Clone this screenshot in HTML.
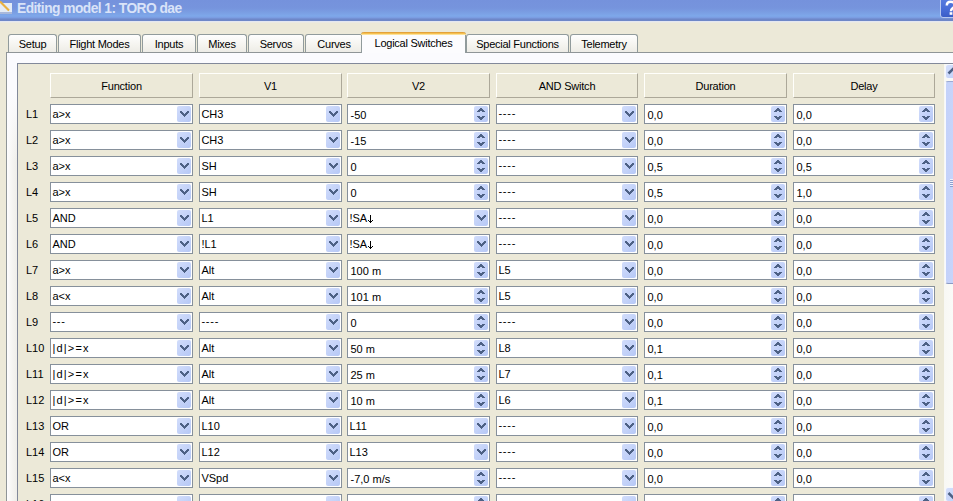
<!DOCTYPE html>
<html><head><meta charset="utf-8"><style>
html,body{margin:0;padding:0;}
body{width:953px;height:501px;overflow:hidden;position:relative;background:#ece9d8;font-family:"Liberation Sans",sans-serif;font-size:11px;color:#000;}
div,i,span{box-sizing:border-box;}
.title{position:absolute;left:0;top:0;width:953px;height:23px;background:linear-gradient(#7592dc 0px,#7694dd 8px,#7a9de2 12px,#7ea8ea 16px,#7a9ae0 18px,#6e87c8 19px,#6e87c8 21px,#e4e7f0 21px,#e4e7f0 22px,#ebeae2 22px,#ebeae2 23px);}
.ttl{position:absolute;left:17px;top:1px;font-weight:bold;font-size:13.8px;line-height:16px;color:#d9e3f8;letter-spacing:-0.55px;}
.ico{position:absolute;left:0;top:0;}
.help{position:absolute;left:940px;top:-3px;width:20px;height:21px;background:linear-gradient(#5a7ee0,#4468d4 70%,#3a5cc6);border:1px solid #b8c8f0;border-radius:3px;}
.help svg{position:absolute;left:0px;top:2px;}
.tab{position:absolute;top:34px;height:19px;border:1px solid #919b9c;border-bottom:none;border-radius:3px 3px 0 0;background:linear-gradient(#fefefe,#f4f3ee 60%,#ecebe5);text-align:center;line-height:18px;white-space:nowrap;letter-spacing:-0.25px;}
.tab.act{top:32px;height:21px;background:#fcfcfe;border-top:none;z-index:3;line-height:18px;padding-top:2px;}
.tab.act::before{content:"";position:absolute;left:-1px;right:-1px;top:0;height:3px;border-radius:3px 3px 0 0;background:linear-gradient(#e3a23a 0 1px,#f6bf4f 1px 2px,#fbe29a 2px 3px);}
.pane{position:absolute;left:6px;top:52px;width:960px;height:460px;border:1px solid #8f9597;background:linear-gradient(180deg,#fbfbfe 0,#fbfbfe 40px,rgba(251,251,254,0) 110px),linear-gradient(90deg,#fdfdfe 0,#f6f5f2 5px,#efeee9 10px);z-index:2;}
.act{z-index:3}
.panel{position:absolute;left:17px;top:63px;width:940px;height:450px;border:1px solid #82899a;background:#ece9d8;z-index:3;}
.hd,.lb,.cb,.sb{z-index:4;}
.hd{position:absolute;top:73px;height:25px;border-top:1px solid #fffffb;border-left:1px solid #fffffb;border-right:1px solid #aca899;border-bottom:1px solid #aca899;background:#ece9d8;text-align:center;line-height:25px;letter-spacing:-0.2px;}
.lb{position:absolute;left:26px;height:20px;line-height:20px;}
.cb{position:absolute;height:20px;border:1px solid #86909b;background:#fff;overflow:hidden;white-space:nowrap;}
.cb span{position:absolute;left:1.4px;top:0;line-height:18px;}
.dd{position:absolute;right:1px;top:1px;width:14px;height:16px;border-radius:2px;background:linear-gradient(135deg,#d2ddfb,#b6c8f6);}
.sb{position:absolute;left:944px;top:64px;width:11px;height:440px;background:linear-gradient(90deg,#f8f8f4,#fbfbf9);}
.sbup{position:absolute;left:1px;top:0px;width:18px;height:15px;border-radius:3px;background:linear-gradient(135deg,#d6e0fc,#bccdf8);border:1px solid #f6f8fe;}
.sbup svg,.sbdn svg{position:absolute;left:1px;top:0;}
.thumb{position:absolute;left:1px;top:17px;width:18px;height:203px;border-radius:3px;background:linear-gradient(90deg,#c4d2fa,#cad7fb);border:1px solid #f8f9fe;border-top:1px solid #9aaad4;border-bottom:1px solid #8b9ac4;}
.grip{position:absolute;left:4px;top:97px;width:10px;height:8px;background:repeating-linear-gradient(#eef2fe 0 1px,#8d9fd0 1px 2px);}
.sbdn{position:absolute;left:1px;top:423px;width:18px;height:15px;border-radius:3px;background:linear-gradient(135deg,#d6e0fc,#bccdf8);border:1px solid #f6f8fe;}
.spn span{left:2.5px;top:1px;}
b{font-weight:normal;}
.ls{letter-spacing:1.2px;}
.ds{position:relative;top:-1px;letter-spacing:0.8px;}
.arr{vertical-align:-3px;margin-left:1px;}

</style></head><body>
<div class="title"><svg class="ico" width="14" height="16"><rect x="0" y="3" width="12" height="9" fill="#e4ebf5"/><rect x="0" y="12" width="12" height="2" fill="#a9b8da"/><path d="M0 1.5L9 10.5" stroke="#e8b040" stroke-width="2.2"/></svg><div class="ttl">Editing model 1: TORO dae</div><div class="help"><svg width="18" height="17"><path d="M5.8 5.5Q5.8 1.8 9.8 1.8Q13.8 1.8 13.8 5Q13.8 7 11.5 8.3Q10 9.2 10 11.2" stroke="#fff" stroke-width="2.5" fill="none"/><rect x="8.6" y="12.2" width="2.8" height="2.6" fill="#fff"/></svg></div></div>
<div class="tline"></div>
<div class="tab" style="left:8px;width:49px">Setup</div><div class="tab" style="left:58px;width:83px">Flight Modes</div><div class="tab" style="left:142px;width:54px">Inputs</div><div class="tab" style="left:197px;width:50px">Mixes</div><div class="tab" style="left:248px;width:56px">Servos</div><div class="tab" style="left:305px;width:58px">Curves</div><div class="tab" style="left:466px;width:103px">Special Functions</div><div class="tab" style="left:570px;width:68px">Telemetry</div><div class="tab act" style="left:361px;width:105px">Logical Switches</div>
<div class="pane"></div>

<div class="panel"></div>
<div class="hd" style="left:50px;width:143px">Function</div><div class="hd" style="left:199px;width:143px">V1</div><div class="hd" style="left:347px;width:143px">V2</div><div class="hd" style="left:496px;width:142px">AND Switch</div><div class="hd" style="left:644px;width:143px">Duration</div><div class="hd" style="left:793px;width:142px">Delay</div><div class="lb" style="top:104px">L1</div><div class="cb" style="left:50px;top:104px;width:143px"><span>a>x</span><svg class="dd" width="14" height="16"><path d="M3 5h2v1h1v1h1v1h1v-1h1v-1h1v-1h2v2h-1v1h-1v1h-1v1h-1v1h-1v-1h-1v-1h-1v-1h-1v-1h-1z" fill="#4d6185"/></svg></div><div class="cb" style="left:199px;top:104px;width:143px"><span>CH3</span><svg class="dd" width="14" height="16"><path d="M3 5h2v1h1v1h1v1h1v-1h1v-1h1v-1h2v2h-1v1h-1v1h-1v1h-1v1h-1v-1h-1v-1h-1v-1h-1v-1h-1z" fill="#4d6185"/></svg></div><div class="cb spn" style="left:347px;top:104px;width:143px"><span>-50</span><svg class="dd" width="14" height="16"><path d="M6 2h2v1h1v1h1v1h1v1h-3v-1h-2v1h-3v-1h1v-1h1v-1h1z M3 10h3v1h2v-1h3v1h-1v1h-1v1h-1v1h-2v-1h-1v-1h-1v-1h-1z" fill="#4d6185"/></svg></div><div class="cb" style="left:496px;top:104px;width:142px"><span><b class="ds">----</b></span><svg class="dd" width="14" height="16"><path d="M3 5h2v1h1v1h1v1h1v-1h1v-1h1v-1h2v2h-1v1h-1v1h-1v1h-1v1h-1v-1h-1v-1h-1v-1h-1v-1h-1z" fill="#4d6185"/></svg></div><div class="cb spn" style="left:644px;top:104px;width:143px"><span>0,0</span><svg class="dd" width="14" height="16"><path d="M6 2h2v1h1v1h1v1h1v1h-3v-1h-2v1h-3v-1h1v-1h1v-1h1z M3 10h3v1h2v-1h3v1h-1v1h-1v1h-1v1h-2v-1h-1v-1h-1v-1h-1z" fill="#4d6185"/></svg></div><div class="cb spn" style="left:793px;top:104px;width:142px"><span>0,0</span><svg class="dd" width="14" height="16"><path d="M6 2h2v1h1v1h1v1h1v1h-3v-1h-2v1h-3v-1h1v-1h1v-1h1z M3 10h3v1h2v-1h3v1h-1v1h-1v1h-1v1h-2v-1h-1v-1h-1v-1h-1z" fill="#4d6185"/></svg></div><div class="lb" style="top:130px">L2</div><div class="cb" style="left:50px;top:130px;width:143px"><span>a>x</span><svg class="dd" width="14" height="16"><path d="M3 5h2v1h1v1h1v1h1v-1h1v-1h1v-1h2v2h-1v1h-1v1h-1v1h-1v1h-1v-1h-1v-1h-1v-1h-1v-1h-1z" fill="#4d6185"/></svg></div><div class="cb" style="left:199px;top:130px;width:143px"><span>CH3</span><svg class="dd" width="14" height="16"><path d="M3 5h2v1h1v1h1v1h1v-1h1v-1h1v-1h2v2h-1v1h-1v1h-1v1h-1v1h-1v-1h-1v-1h-1v-1h-1v-1h-1z" fill="#4d6185"/></svg></div><div class="cb spn" style="left:347px;top:130px;width:143px"><span>-15</span><svg class="dd" width="14" height="16"><path d="M6 2h2v1h1v1h1v1h1v1h-3v-1h-2v1h-3v-1h1v-1h1v-1h1z M3 10h3v1h2v-1h3v1h-1v1h-1v1h-1v1h-2v-1h-1v-1h-1v-1h-1z" fill="#4d6185"/></svg></div><div class="cb" style="left:496px;top:130px;width:142px"><span><b class="ds">----</b></span><svg class="dd" width="14" height="16"><path d="M3 5h2v1h1v1h1v1h1v-1h1v-1h1v-1h2v2h-1v1h-1v1h-1v1h-1v1h-1v-1h-1v-1h-1v-1h-1v-1h-1z" fill="#4d6185"/></svg></div><div class="cb spn" style="left:644px;top:130px;width:143px"><span>0,0</span><svg class="dd" width="14" height="16"><path d="M6 2h2v1h1v1h1v1h1v1h-3v-1h-2v1h-3v-1h1v-1h1v-1h1z M3 10h3v1h2v-1h3v1h-1v1h-1v1h-1v1h-2v-1h-1v-1h-1v-1h-1z" fill="#4d6185"/></svg></div><div class="cb spn" style="left:793px;top:130px;width:142px"><span>0,0</span><svg class="dd" width="14" height="16"><path d="M6 2h2v1h1v1h1v1h1v1h-3v-1h-2v1h-3v-1h1v-1h1v-1h1z M3 10h3v1h2v-1h3v1h-1v1h-1v1h-1v1h-2v-1h-1v-1h-1v-1h-1z" fill="#4d6185"/></svg></div><div class="lb" style="top:156px">L3</div><div class="cb" style="left:50px;top:156px;width:143px"><span>a>x</span><svg class="dd" width="14" height="16"><path d="M3 5h2v1h1v1h1v1h1v-1h1v-1h1v-1h2v2h-1v1h-1v1h-1v1h-1v1h-1v-1h-1v-1h-1v-1h-1v-1h-1z" fill="#4d6185"/></svg></div><div class="cb" style="left:199px;top:156px;width:143px"><span>SH</span><svg class="dd" width="14" height="16"><path d="M3 5h2v1h1v1h1v1h1v-1h1v-1h1v-1h2v2h-1v1h-1v1h-1v1h-1v1h-1v-1h-1v-1h-1v-1h-1v-1h-1z" fill="#4d6185"/></svg></div><div class="cb spn" style="left:347px;top:156px;width:143px"><span>0</span><svg class="dd" width="14" height="16"><path d="M6 2h2v1h1v1h1v1h1v1h-3v-1h-2v1h-3v-1h1v-1h1v-1h1z M3 10h3v1h2v-1h3v1h-1v1h-1v1h-1v1h-2v-1h-1v-1h-1v-1h-1z" fill="#4d6185"/></svg></div><div class="cb" style="left:496px;top:156px;width:142px"><span><b class="ds">----</b></span><svg class="dd" width="14" height="16"><path d="M3 5h2v1h1v1h1v1h1v-1h1v-1h1v-1h2v2h-1v1h-1v1h-1v1h-1v1h-1v-1h-1v-1h-1v-1h-1v-1h-1z" fill="#4d6185"/></svg></div><div class="cb spn" style="left:644px;top:156px;width:143px"><span>0,5</span><svg class="dd" width="14" height="16"><path d="M6 2h2v1h1v1h1v1h1v1h-3v-1h-2v1h-3v-1h1v-1h1v-1h1z M3 10h3v1h2v-1h3v1h-1v1h-1v1h-1v1h-2v-1h-1v-1h-1v-1h-1z" fill="#4d6185"/></svg></div><div class="cb spn" style="left:793px;top:156px;width:142px"><span>0,5</span><svg class="dd" width="14" height="16"><path d="M6 2h2v1h1v1h1v1h1v1h-3v-1h-2v1h-3v-1h1v-1h1v-1h1z M3 10h3v1h2v-1h3v1h-1v1h-1v1h-1v1h-2v-1h-1v-1h-1v-1h-1z" fill="#4d6185"/></svg></div><div class="lb" style="top:182px">L4</div><div class="cb" style="left:50px;top:182px;width:143px"><span>a>x</span><svg class="dd" width="14" height="16"><path d="M3 5h2v1h1v1h1v1h1v-1h1v-1h1v-1h2v2h-1v1h-1v1h-1v1h-1v1h-1v-1h-1v-1h-1v-1h-1v-1h-1z" fill="#4d6185"/></svg></div><div class="cb" style="left:199px;top:182px;width:143px"><span>SH</span><svg class="dd" width="14" height="16"><path d="M3 5h2v1h1v1h1v1h1v-1h1v-1h1v-1h2v2h-1v1h-1v1h-1v1h-1v1h-1v-1h-1v-1h-1v-1h-1v-1h-1z" fill="#4d6185"/></svg></div><div class="cb spn" style="left:347px;top:182px;width:143px"><span>0</span><svg class="dd" width="14" height="16"><path d="M6 2h2v1h1v1h1v1h1v1h-3v-1h-2v1h-3v-1h1v-1h1v-1h1z M3 10h3v1h2v-1h3v1h-1v1h-1v1h-1v1h-2v-1h-1v-1h-1v-1h-1z" fill="#4d6185"/></svg></div><div class="cb" style="left:496px;top:182px;width:142px"><span><b class="ds">----</b></span><svg class="dd" width="14" height="16"><path d="M3 5h2v1h1v1h1v1h1v-1h1v-1h1v-1h2v2h-1v1h-1v1h-1v1h-1v1h-1v-1h-1v-1h-1v-1h-1v-1h-1z" fill="#4d6185"/></svg></div><div class="cb spn" style="left:644px;top:182px;width:143px"><span>0,5</span><svg class="dd" width="14" height="16"><path d="M6 2h2v1h1v1h1v1h1v1h-3v-1h-2v1h-3v-1h1v-1h1v-1h1z M3 10h3v1h2v-1h3v1h-1v1h-1v1h-1v1h-2v-1h-1v-1h-1v-1h-1z" fill="#4d6185"/></svg></div><div class="cb spn" style="left:793px;top:182px;width:142px"><span>1,0</span><svg class="dd" width="14" height="16"><path d="M6 2h2v1h1v1h1v1h1v1h-3v-1h-2v1h-3v-1h1v-1h1v-1h1z M3 10h3v1h2v-1h3v1h-1v1h-1v1h-1v1h-2v-1h-1v-1h-1v-1h-1z" fill="#4d6185"/></svg></div><div class="lb" style="top:208px">L5</div><div class="cb" style="left:50px;top:208px;width:143px"><span>AND</span><svg class="dd" width="14" height="16"><path d="M3 5h2v1h1v1h1v1h1v-1h1v-1h1v-1h2v2h-1v1h-1v1h-1v1h-1v1h-1v-1h-1v-1h-1v-1h-1v-1h-1z" fill="#4d6185"/></svg></div><div class="cb" style="left:199px;top:208px;width:143px"><span>L1</span><svg class="dd" width="14" height="16"><path d="M3 5h2v1h1v1h1v1h1v-1h1v-1h1v-1h2v2h-1v1h-1v1h-1v1h-1v1h-1v-1h-1v-1h-1v-1h-1v-1h-1z" fill="#4d6185"/></svg></div><div class="cb" style="left:347px;top:208px;width:143px"><span>!SA<svg class="arr" width="5" height="10"><path d="M2 0h1v6h1v-1h1v1h-1v1h-1v1h-1v-1h-1v-1h-1v-1h1v1h1z" fill="#000"/></svg></span><svg class="dd" width="14" height="16"><path d="M3 5h2v1h1v1h1v1h1v-1h1v-1h1v-1h2v2h-1v1h-1v1h-1v1h-1v1h-1v-1h-1v-1h-1v-1h-1v-1h-1z" fill="#4d6185"/></svg></div><div class="cb" style="left:496px;top:208px;width:142px"><span><b class="ds">----</b></span><svg class="dd" width="14" height="16"><path d="M3 5h2v1h1v1h1v1h1v-1h1v-1h1v-1h2v2h-1v1h-1v1h-1v1h-1v1h-1v-1h-1v-1h-1v-1h-1v-1h-1z" fill="#4d6185"/></svg></div><div class="cb spn" style="left:644px;top:208px;width:143px"><span>0,0</span><svg class="dd" width="14" height="16"><path d="M6 2h2v1h1v1h1v1h1v1h-3v-1h-2v1h-3v-1h1v-1h1v-1h1z M3 10h3v1h2v-1h3v1h-1v1h-1v1h-1v1h-2v-1h-1v-1h-1v-1h-1z" fill="#4d6185"/></svg></div><div class="cb spn" style="left:793px;top:208px;width:142px"><span>0,0</span><svg class="dd" width="14" height="16"><path d="M6 2h2v1h1v1h1v1h1v1h-3v-1h-2v1h-3v-1h1v-1h1v-1h1z M3 10h3v1h2v-1h3v1h-1v1h-1v1h-1v1h-2v-1h-1v-1h-1v-1h-1z" fill="#4d6185"/></svg></div><div class="lb" style="top:234px">L6</div><div class="cb" style="left:50px;top:234px;width:143px"><span>AND</span><svg class="dd" width="14" height="16"><path d="M3 5h2v1h1v1h1v1h1v-1h1v-1h1v-1h2v2h-1v1h-1v1h-1v1h-1v1h-1v-1h-1v-1h-1v-1h-1v-1h-1z" fill="#4d6185"/></svg></div><div class="cb" style="left:199px;top:234px;width:143px"><span>!L1</span><svg class="dd" width="14" height="16"><path d="M3 5h2v1h1v1h1v1h1v-1h1v-1h1v-1h2v2h-1v1h-1v1h-1v1h-1v1h-1v-1h-1v-1h-1v-1h-1v-1h-1z" fill="#4d6185"/></svg></div><div class="cb" style="left:347px;top:234px;width:143px"><span>!SA<svg class="arr" width="5" height="10"><path d="M2 0h1v6h1v-1h1v1h-1v1h-1v1h-1v-1h-1v-1h-1v-1h1v1h1z" fill="#000"/></svg></span><svg class="dd" width="14" height="16"><path d="M3 5h2v1h1v1h1v1h1v-1h1v-1h1v-1h2v2h-1v1h-1v1h-1v1h-1v1h-1v-1h-1v-1h-1v-1h-1v-1h-1z" fill="#4d6185"/></svg></div><div class="cb" style="left:496px;top:234px;width:142px"><span><b class="ds">----</b></span><svg class="dd" width="14" height="16"><path d="M3 5h2v1h1v1h1v1h1v-1h1v-1h1v-1h2v2h-1v1h-1v1h-1v1h-1v1h-1v-1h-1v-1h-1v-1h-1v-1h-1z" fill="#4d6185"/></svg></div><div class="cb spn" style="left:644px;top:234px;width:143px"><span>0,0</span><svg class="dd" width="14" height="16"><path d="M6 2h2v1h1v1h1v1h1v1h-3v-1h-2v1h-3v-1h1v-1h1v-1h1z M3 10h3v1h2v-1h3v1h-1v1h-1v1h-1v1h-2v-1h-1v-1h-1v-1h-1z" fill="#4d6185"/></svg></div><div class="cb spn" style="left:793px;top:234px;width:142px"><span>0,0</span><svg class="dd" width="14" height="16"><path d="M6 2h2v1h1v1h1v1h1v1h-3v-1h-2v1h-3v-1h1v-1h1v-1h1z M3 10h3v1h2v-1h3v1h-1v1h-1v1h-1v1h-2v-1h-1v-1h-1v-1h-1z" fill="#4d6185"/></svg></div><div class="lb" style="top:260px">L7</div><div class="cb" style="left:50px;top:260px;width:143px"><span>a>x</span><svg class="dd" width="14" height="16"><path d="M3 5h2v1h1v1h1v1h1v-1h1v-1h1v-1h2v2h-1v1h-1v1h-1v1h-1v1h-1v-1h-1v-1h-1v-1h-1v-1h-1z" fill="#4d6185"/></svg></div><div class="cb" style="left:199px;top:260px;width:143px"><span>Alt</span><svg class="dd" width="14" height="16"><path d="M3 5h2v1h1v1h1v1h1v-1h1v-1h1v-1h2v2h-1v1h-1v1h-1v1h-1v1h-1v-1h-1v-1h-1v-1h-1v-1h-1z" fill="#4d6185"/></svg></div><div class="cb spn" style="left:347px;top:260px;width:143px"><span>100 m</span><svg class="dd" width="14" height="16"><path d="M6 2h2v1h1v1h1v1h1v1h-3v-1h-2v1h-3v-1h1v-1h1v-1h1z M3 10h3v1h2v-1h3v1h-1v1h-1v1h-1v1h-2v-1h-1v-1h-1v-1h-1z" fill="#4d6185"/></svg></div><div class="cb" style="left:496px;top:260px;width:142px"><span>L5</span><svg class="dd" width="14" height="16"><path d="M3 5h2v1h1v1h1v1h1v-1h1v-1h1v-1h2v2h-1v1h-1v1h-1v1h-1v1h-1v-1h-1v-1h-1v-1h-1v-1h-1z" fill="#4d6185"/></svg></div><div class="cb spn" style="left:644px;top:260px;width:143px"><span>0,0</span><svg class="dd" width="14" height="16"><path d="M6 2h2v1h1v1h1v1h1v1h-3v-1h-2v1h-3v-1h1v-1h1v-1h1z M3 10h3v1h2v-1h3v1h-1v1h-1v1h-1v1h-2v-1h-1v-1h-1v-1h-1z" fill="#4d6185"/></svg></div><div class="cb spn" style="left:793px;top:260px;width:142px"><span>0,0</span><svg class="dd" width="14" height="16"><path d="M6 2h2v1h1v1h1v1h1v1h-3v-1h-2v1h-3v-1h1v-1h1v-1h1z M3 10h3v1h2v-1h3v1h-1v1h-1v1h-1v1h-2v-1h-1v-1h-1v-1h-1z" fill="#4d6185"/></svg></div><div class="lb" style="top:286px">L8</div><div class="cb" style="left:50px;top:286px;width:143px"><span>a&lt;x</span><svg class="dd" width="14" height="16"><path d="M3 5h2v1h1v1h1v1h1v-1h1v-1h1v-1h2v2h-1v1h-1v1h-1v1h-1v1h-1v-1h-1v-1h-1v-1h-1v-1h-1z" fill="#4d6185"/></svg></div><div class="cb" style="left:199px;top:286px;width:143px"><span>Alt</span><svg class="dd" width="14" height="16"><path d="M3 5h2v1h1v1h1v1h1v-1h1v-1h1v-1h2v2h-1v1h-1v1h-1v1h-1v1h-1v-1h-1v-1h-1v-1h-1v-1h-1z" fill="#4d6185"/></svg></div><div class="cb spn" style="left:347px;top:286px;width:143px"><span>101 m</span><svg class="dd" width="14" height="16"><path d="M6 2h2v1h1v1h1v1h1v1h-3v-1h-2v1h-3v-1h1v-1h1v-1h1z M3 10h3v1h2v-1h3v1h-1v1h-1v1h-1v1h-2v-1h-1v-1h-1v-1h-1z" fill="#4d6185"/></svg></div><div class="cb" style="left:496px;top:286px;width:142px"><span>L5</span><svg class="dd" width="14" height="16"><path d="M3 5h2v1h1v1h1v1h1v-1h1v-1h1v-1h2v2h-1v1h-1v1h-1v1h-1v1h-1v-1h-1v-1h-1v-1h-1v-1h-1z" fill="#4d6185"/></svg></div><div class="cb spn" style="left:644px;top:286px;width:143px"><span>0,0</span><svg class="dd" width="14" height="16"><path d="M6 2h2v1h1v1h1v1h1v1h-3v-1h-2v1h-3v-1h1v-1h1v-1h1z M3 10h3v1h2v-1h3v1h-1v1h-1v1h-1v1h-2v-1h-1v-1h-1v-1h-1z" fill="#4d6185"/></svg></div><div class="cb spn" style="left:793px;top:286px;width:142px"><span>0,0</span><svg class="dd" width="14" height="16"><path d="M6 2h2v1h1v1h1v1h1v1h-3v-1h-2v1h-3v-1h1v-1h1v-1h1z M3 10h3v1h2v-1h3v1h-1v1h-1v1h-1v1h-2v-1h-1v-1h-1v-1h-1z" fill="#4d6185"/></svg></div><div class="lb" style="top:312px">L9</div><div class="cb" style="left:50px;top:312px;width:143px"><span><b class="ds">---</b></span><svg class="dd" width="14" height="16"><path d="M3 5h2v1h1v1h1v1h1v-1h1v-1h1v-1h2v2h-1v1h-1v1h-1v1h-1v1h-1v-1h-1v-1h-1v-1h-1v-1h-1z" fill="#4d6185"/></svg></div><div class="cb" style="left:199px;top:312px;width:143px"><span><b class="ds">----</b></span><svg class="dd" width="14" height="16"><path d="M3 5h2v1h1v1h1v1h1v-1h1v-1h1v-1h2v2h-1v1h-1v1h-1v1h-1v1h-1v-1h-1v-1h-1v-1h-1v-1h-1z" fill="#4d6185"/></svg></div><div class="cb spn" style="left:347px;top:312px;width:143px"><span>0</span><svg class="dd" width="14" height="16"><path d="M6 2h2v1h1v1h1v1h1v1h-3v-1h-2v1h-3v-1h1v-1h1v-1h1z M3 10h3v1h2v-1h3v1h-1v1h-1v1h-1v1h-2v-1h-1v-1h-1v-1h-1z" fill="#4d6185"/></svg></div><div class="cb" style="left:496px;top:312px;width:142px"><span><b class="ds">----</b></span><svg class="dd" width="14" height="16"><path d="M3 5h2v1h1v1h1v1h1v-1h1v-1h1v-1h2v2h-1v1h-1v1h-1v1h-1v1h-1v-1h-1v-1h-1v-1h-1v-1h-1z" fill="#4d6185"/></svg></div><div class="cb spn" style="left:644px;top:312px;width:143px"><span>0,0</span><svg class="dd" width="14" height="16"><path d="M6 2h2v1h1v1h1v1h1v1h-3v-1h-2v1h-3v-1h1v-1h1v-1h1z M3 10h3v1h2v-1h3v1h-1v1h-1v1h-1v1h-2v-1h-1v-1h-1v-1h-1z" fill="#4d6185"/></svg></div><div class="cb spn" style="left:793px;top:312px;width:142px"><span>0,0</span><svg class="dd" width="14" height="16"><path d="M6 2h2v1h1v1h1v1h1v1h-3v-1h-2v1h-3v-1h1v-1h1v-1h1z M3 10h3v1h2v-1h3v1h-1v1h-1v1h-1v1h-2v-1h-1v-1h-1v-1h-1z" fill="#4d6185"/></svg></div><div class="lb" style="top:338px">L10</div><div class="cb" style="left:50px;top:338px;width:143px"><span><b class="ls">|d|&gt;=x</b></span><svg class="dd" width="14" height="16"><path d="M3 5h2v1h1v1h1v1h1v-1h1v-1h1v-1h2v2h-1v1h-1v1h-1v1h-1v1h-1v-1h-1v-1h-1v-1h-1v-1h-1z" fill="#4d6185"/></svg></div><div class="cb" style="left:199px;top:338px;width:143px"><span>Alt</span><svg class="dd" width="14" height="16"><path d="M3 5h2v1h1v1h1v1h1v-1h1v-1h1v-1h2v2h-1v1h-1v1h-1v1h-1v1h-1v-1h-1v-1h-1v-1h-1v-1h-1z" fill="#4d6185"/></svg></div><div class="cb spn" style="left:347px;top:338px;width:143px"><span>50 m</span><svg class="dd" width="14" height="16"><path d="M6 2h2v1h1v1h1v1h1v1h-3v-1h-2v1h-3v-1h1v-1h1v-1h1z M3 10h3v1h2v-1h3v1h-1v1h-1v1h-1v1h-2v-1h-1v-1h-1v-1h-1z" fill="#4d6185"/></svg></div><div class="cb" style="left:496px;top:338px;width:142px"><span>L8</span><svg class="dd" width="14" height="16"><path d="M3 5h2v1h1v1h1v1h1v-1h1v-1h1v-1h2v2h-1v1h-1v1h-1v1h-1v1h-1v-1h-1v-1h-1v-1h-1v-1h-1z" fill="#4d6185"/></svg></div><div class="cb spn" style="left:644px;top:338px;width:143px"><span>0,1</span><svg class="dd" width="14" height="16"><path d="M6 2h2v1h1v1h1v1h1v1h-3v-1h-2v1h-3v-1h1v-1h1v-1h1z M3 10h3v1h2v-1h3v1h-1v1h-1v1h-1v1h-2v-1h-1v-1h-1v-1h-1z" fill="#4d6185"/></svg></div><div class="cb spn" style="left:793px;top:338px;width:142px"><span>0,0</span><svg class="dd" width="14" height="16"><path d="M6 2h2v1h1v1h1v1h1v1h-3v-1h-2v1h-3v-1h1v-1h1v-1h1z M3 10h3v1h2v-1h3v1h-1v1h-1v1h-1v1h-2v-1h-1v-1h-1v-1h-1z" fill="#4d6185"/></svg></div><div class="lb" style="top:364px">L11</div><div class="cb" style="left:50px;top:364px;width:143px"><span><b class="ls">|d|&gt;=x</b></span><svg class="dd" width="14" height="16"><path d="M3 5h2v1h1v1h1v1h1v-1h1v-1h1v-1h2v2h-1v1h-1v1h-1v1h-1v1h-1v-1h-1v-1h-1v-1h-1v-1h-1z" fill="#4d6185"/></svg></div><div class="cb" style="left:199px;top:364px;width:143px"><span>Alt</span><svg class="dd" width="14" height="16"><path d="M3 5h2v1h1v1h1v1h1v-1h1v-1h1v-1h2v2h-1v1h-1v1h-1v1h-1v1h-1v-1h-1v-1h-1v-1h-1v-1h-1z" fill="#4d6185"/></svg></div><div class="cb spn" style="left:347px;top:364px;width:143px"><span>25 m</span><svg class="dd" width="14" height="16"><path d="M6 2h2v1h1v1h1v1h1v1h-3v-1h-2v1h-3v-1h1v-1h1v-1h1z M3 10h3v1h2v-1h3v1h-1v1h-1v1h-1v1h-2v-1h-1v-1h-1v-1h-1z" fill="#4d6185"/></svg></div><div class="cb" style="left:496px;top:364px;width:142px"><span>L7</span><svg class="dd" width="14" height="16"><path d="M3 5h2v1h1v1h1v1h1v-1h1v-1h1v-1h2v2h-1v1h-1v1h-1v1h-1v1h-1v-1h-1v-1h-1v-1h-1v-1h-1z" fill="#4d6185"/></svg></div><div class="cb spn" style="left:644px;top:364px;width:143px"><span>0,1</span><svg class="dd" width="14" height="16"><path d="M6 2h2v1h1v1h1v1h1v1h-3v-1h-2v1h-3v-1h1v-1h1v-1h1z M3 10h3v1h2v-1h3v1h-1v1h-1v1h-1v1h-2v-1h-1v-1h-1v-1h-1z" fill="#4d6185"/></svg></div><div class="cb spn" style="left:793px;top:364px;width:142px"><span>0,0</span><svg class="dd" width="14" height="16"><path d="M6 2h2v1h1v1h1v1h1v1h-3v-1h-2v1h-3v-1h1v-1h1v-1h1z M3 10h3v1h2v-1h3v1h-1v1h-1v1h-1v1h-2v-1h-1v-1h-1v-1h-1z" fill="#4d6185"/></svg></div><div class="lb" style="top:390px">L12</div><div class="cb" style="left:50px;top:390px;width:143px"><span><b class="ls">|d|&gt;=x</b></span><svg class="dd" width="14" height="16"><path d="M3 5h2v1h1v1h1v1h1v-1h1v-1h1v-1h2v2h-1v1h-1v1h-1v1h-1v1h-1v-1h-1v-1h-1v-1h-1v-1h-1z" fill="#4d6185"/></svg></div><div class="cb" style="left:199px;top:390px;width:143px"><span>Alt</span><svg class="dd" width="14" height="16"><path d="M3 5h2v1h1v1h1v1h1v-1h1v-1h1v-1h2v2h-1v1h-1v1h-1v1h-1v1h-1v-1h-1v-1h-1v-1h-1v-1h-1z" fill="#4d6185"/></svg></div><div class="cb spn" style="left:347px;top:390px;width:143px"><span>10 m</span><svg class="dd" width="14" height="16"><path d="M6 2h2v1h1v1h1v1h1v1h-3v-1h-2v1h-3v-1h1v-1h1v-1h1z M3 10h3v1h2v-1h3v1h-1v1h-1v1h-1v1h-2v-1h-1v-1h-1v-1h-1z" fill="#4d6185"/></svg></div><div class="cb" style="left:496px;top:390px;width:142px"><span>L6</span><svg class="dd" width="14" height="16"><path d="M3 5h2v1h1v1h1v1h1v-1h1v-1h1v-1h2v2h-1v1h-1v1h-1v1h-1v1h-1v-1h-1v-1h-1v-1h-1v-1h-1z" fill="#4d6185"/></svg></div><div class="cb spn" style="left:644px;top:390px;width:143px"><span>0,1</span><svg class="dd" width="14" height="16"><path d="M6 2h2v1h1v1h1v1h1v1h-3v-1h-2v1h-3v-1h1v-1h1v-1h1z M3 10h3v1h2v-1h3v1h-1v1h-1v1h-1v1h-2v-1h-1v-1h-1v-1h-1z" fill="#4d6185"/></svg></div><div class="cb spn" style="left:793px;top:390px;width:142px"><span>0,0</span><svg class="dd" width="14" height="16"><path d="M6 2h2v1h1v1h1v1h1v1h-3v-1h-2v1h-3v-1h1v-1h1v-1h1z M3 10h3v1h2v-1h3v1h-1v1h-1v1h-1v1h-2v-1h-1v-1h-1v-1h-1z" fill="#4d6185"/></svg></div><div class="lb" style="top:416px">L13</div><div class="cb" style="left:50px;top:416px;width:143px"><span>OR</span><svg class="dd" width="14" height="16"><path d="M3 5h2v1h1v1h1v1h1v-1h1v-1h1v-1h2v2h-1v1h-1v1h-1v1h-1v1h-1v-1h-1v-1h-1v-1h-1v-1h-1z" fill="#4d6185"/></svg></div><div class="cb" style="left:199px;top:416px;width:143px"><span>L10</span><svg class="dd" width="14" height="16"><path d="M3 5h2v1h1v1h1v1h1v-1h1v-1h1v-1h2v2h-1v1h-1v1h-1v1h-1v1h-1v-1h-1v-1h-1v-1h-1v-1h-1z" fill="#4d6185"/></svg></div><div class="cb" style="left:347px;top:416px;width:143px"><span>L11</span><svg class="dd" width="14" height="16"><path d="M3 5h2v1h1v1h1v1h1v-1h1v-1h1v-1h2v2h-1v1h-1v1h-1v1h-1v1h-1v-1h-1v-1h-1v-1h-1v-1h-1z" fill="#4d6185"/></svg></div><div class="cb" style="left:496px;top:416px;width:142px"><span><b class="ds">----</b></span><svg class="dd" width="14" height="16"><path d="M3 5h2v1h1v1h1v1h1v-1h1v-1h1v-1h2v2h-1v1h-1v1h-1v1h-1v1h-1v-1h-1v-1h-1v-1h-1v-1h-1z" fill="#4d6185"/></svg></div><div class="cb spn" style="left:644px;top:416px;width:143px"><span>0,0</span><svg class="dd" width="14" height="16"><path d="M6 2h2v1h1v1h1v1h1v1h-3v-1h-2v1h-3v-1h1v-1h1v-1h1z M3 10h3v1h2v-1h3v1h-1v1h-1v1h-1v1h-2v-1h-1v-1h-1v-1h-1z" fill="#4d6185"/></svg></div><div class="cb spn" style="left:793px;top:416px;width:142px"><span>0,0</span><svg class="dd" width="14" height="16"><path d="M6 2h2v1h1v1h1v1h1v1h-3v-1h-2v1h-3v-1h1v-1h1v-1h1z M3 10h3v1h2v-1h3v1h-1v1h-1v1h-1v1h-2v-1h-1v-1h-1v-1h-1z" fill="#4d6185"/></svg></div><div class="lb" style="top:442px">L14</div><div class="cb" style="left:50px;top:442px;width:143px"><span>OR</span><svg class="dd" width="14" height="16"><path d="M3 5h2v1h1v1h1v1h1v-1h1v-1h1v-1h2v2h-1v1h-1v1h-1v1h-1v1h-1v-1h-1v-1h-1v-1h-1v-1h-1z" fill="#4d6185"/></svg></div><div class="cb" style="left:199px;top:442px;width:143px"><span>L12</span><svg class="dd" width="14" height="16"><path d="M3 5h2v1h1v1h1v1h1v-1h1v-1h1v-1h2v2h-1v1h-1v1h-1v1h-1v1h-1v-1h-1v-1h-1v-1h-1v-1h-1z" fill="#4d6185"/></svg></div><div class="cb" style="left:347px;top:442px;width:143px"><span>L13</span><svg class="dd" width="14" height="16"><path d="M3 5h2v1h1v1h1v1h1v-1h1v-1h1v-1h2v2h-1v1h-1v1h-1v1h-1v1h-1v-1h-1v-1h-1v-1h-1v-1h-1z" fill="#4d6185"/></svg></div><div class="cb" style="left:496px;top:442px;width:142px"><span><b class="ds">----</b></span><svg class="dd" width="14" height="16"><path d="M3 5h2v1h1v1h1v1h1v-1h1v-1h1v-1h2v2h-1v1h-1v1h-1v1h-1v1h-1v-1h-1v-1h-1v-1h-1v-1h-1z" fill="#4d6185"/></svg></div><div class="cb spn" style="left:644px;top:442px;width:143px"><span>0,0</span><svg class="dd" width="14" height="16"><path d="M6 2h2v1h1v1h1v1h1v1h-3v-1h-2v1h-3v-1h1v-1h1v-1h1z M3 10h3v1h2v-1h3v1h-1v1h-1v1h-1v1h-2v-1h-1v-1h-1v-1h-1z" fill="#4d6185"/></svg></div><div class="cb spn" style="left:793px;top:442px;width:142px"><span>0,0</span><svg class="dd" width="14" height="16"><path d="M6 2h2v1h1v1h1v1h1v1h-3v-1h-2v1h-3v-1h1v-1h1v-1h1z M3 10h3v1h2v-1h3v1h-1v1h-1v1h-1v1h-2v-1h-1v-1h-1v-1h-1z" fill="#4d6185"/></svg></div><div class="lb" style="top:468px">L15</div><div class="cb" style="left:50px;top:468px;width:143px"><span>a&lt;x</span><svg class="dd" width="14" height="16"><path d="M3 5h2v1h1v1h1v1h1v-1h1v-1h1v-1h2v2h-1v1h-1v1h-1v1h-1v1h-1v-1h-1v-1h-1v-1h-1v-1h-1z" fill="#4d6185"/></svg></div><div class="cb" style="left:199px;top:468px;width:143px"><span>VSpd</span><svg class="dd" width="14" height="16"><path d="M3 5h2v1h1v1h1v1h1v-1h1v-1h1v-1h2v2h-1v1h-1v1h-1v1h-1v1h-1v-1h-1v-1h-1v-1h-1v-1h-1z" fill="#4d6185"/></svg></div><div class="cb spn" style="left:347px;top:468px;width:143px"><span>-7,0 m/s</span><svg class="dd" width="14" height="16"><path d="M6 2h2v1h1v1h1v1h1v1h-3v-1h-2v1h-3v-1h1v-1h1v-1h1z M3 10h3v1h2v-1h3v1h-1v1h-1v1h-1v1h-2v-1h-1v-1h-1v-1h-1z" fill="#4d6185"/></svg></div><div class="cb" style="left:496px;top:468px;width:142px"><span><b class="ds">----</b></span><svg class="dd" width="14" height="16"><path d="M3 5h2v1h1v1h1v1h1v-1h1v-1h1v-1h2v2h-1v1h-1v1h-1v1h-1v1h-1v-1h-1v-1h-1v-1h-1v-1h-1z" fill="#4d6185"/></svg></div><div class="cb spn" style="left:644px;top:468px;width:143px"><span>0,0</span><svg class="dd" width="14" height="16"><path d="M6 2h2v1h1v1h1v1h1v1h-3v-1h-2v1h-3v-1h1v-1h1v-1h1z M3 10h3v1h2v-1h3v1h-1v1h-1v1h-1v1h-2v-1h-1v-1h-1v-1h-1z" fill="#4d6185"/></svg></div><div class="cb spn" style="left:793px;top:468px;width:142px"><span>0,0</span><svg class="dd" width="14" height="16"><path d="M6 2h2v1h1v1h1v1h1v1h-3v-1h-2v1h-3v-1h1v-1h1v-1h1z M3 10h3v1h2v-1h3v1h-1v1h-1v1h-1v1h-2v-1h-1v-1h-1v-1h-1z" fill="#4d6185"/></svg></div><div class="lb" style="top:494px">L16</div><div class="cb" style="left:50px;top:494px;width:143px"><span></span><svg class="dd" width="14" height="16"><path d="M3 5h2v1h1v1h1v1h1v-1h1v-1h1v-1h2v2h-1v1h-1v1h-1v1h-1v1h-1v-1h-1v-1h-1v-1h-1v-1h-1z" fill="#4d6185"/></svg></div><div class="cb" style="left:199px;top:494px;width:143px"><span></span><svg class="dd" width="14" height="16"><path d="M3 5h2v1h1v1h1v1h1v-1h1v-1h1v-1h2v2h-1v1h-1v1h-1v1h-1v1h-1v-1h-1v-1h-1v-1h-1v-1h-1z" fill="#4d6185"/></svg></div><div class="cb spn" style="left:347px;top:494px;width:143px"><span></span><svg class="dd" width="14" height="16"><path d="M6 2h2v1h1v1h1v1h1v1h-3v-1h-2v1h-3v-1h1v-1h1v-1h1z M3 10h3v1h2v-1h3v1h-1v1h-1v1h-1v1h-2v-1h-1v-1h-1v-1h-1z" fill="#4d6185"/></svg></div><div class="cb" style="left:496px;top:494px;width:142px"><span></span><svg class="dd" width="14" height="16"><path d="M3 5h2v1h1v1h1v1h1v-1h1v-1h1v-1h2v2h-1v1h-1v1h-1v1h-1v1h-1v-1h-1v-1h-1v-1h-1v-1h-1z" fill="#4d6185"/></svg></div><div class="cb spn" style="left:644px;top:494px;width:143px"><span></span><svg class="dd" width="14" height="16"><path d="M6 2h2v1h1v1h1v1h1v1h-3v-1h-2v1h-3v-1h1v-1h1v-1h1z M3 10h3v1h2v-1h3v1h-1v1h-1v1h-1v1h-2v-1h-1v-1h-1v-1h-1z" fill="#4d6185"/></svg></div><div class="cb spn" style="left:793px;top:494px;width:142px"><span></span><svg class="dd" width="14" height="16"><path d="M6 2h2v1h1v1h1v1h1v1h-3v-1h-2v1h-3v-1h1v-1h1v-1h1z M3 10h3v1h2v-1h3v1h-1v1h-1v1h-1v1h-2v-1h-1v-1h-1v-1h-1z" fill="#4d6185"/></svg></div>
<div class="sb"><div class="sbup"><svg width="16" height="14"><path d="M1.5 8.5L7.5 2.5L13.5 8.5" stroke="#4d6185" stroke-width="2.6" fill="none"/></svg></div><div class="thumb"><div class="grip"></div></div><div class="sbdn"><svg width="16" height="14"><path d="M1.5 5L7.5 11L13.5 5" stroke="#4d6185" stroke-width="2.6" fill="none"/></svg></div></div>
</body></html>
